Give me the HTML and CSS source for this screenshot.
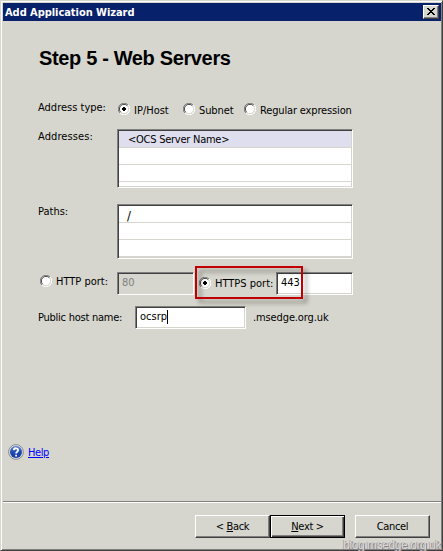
FILE: index.html
```html
<!DOCTYPE html>
<html lang="en">
<head>
<meta charset="utf-8">
<title>Add Application Wizard</title>
<link rel="stylesheet" href="styles.css">
</head>
<body>
<main class="dialog">
  <header class="titlebar">
    <span class="caption">Add Application Wizard</span>
    <button class="close" aria-label="Close"><svg width="8" height="7" viewBox="0 0 8 7" shape-rendering="crispEdges"><path d="M0 0h2v1h1v1h2v-1h1v-1h2v1h-1v1h-1v1h-1v1h1v1h1v1h1v1h-2v-1h-1v-1h-2v1h-1v1h-2v-1h1v-1h1v-1h1v-1h-1v-1h-1v-1h-1z"/></svg></button>
  </header>
  <h1>Step 5 - Web Servers</h1>
  <section class="form">
    <div class="row types">
      <span class="label t-type">Address type:</span>
      <svg class="radio"><use href="#radio-on"/></svg><span class="opt t-ip">IP/Host</span>
      <svg class="radio"><use href="#radio"/></svg><span class="opt t-subnet">Subnet</span>
      <svg class="radio"><use href="#radio"/></svg><span class="opt t-regex">Regular expression</span>
    </div>
    <div class="row addresses">
      <span class="label t-addresses">Addresses:</span>
      <div class="list sunken"><div class="item selected"><span class="t-server">&lt;OCS Server Name&gt;</span></div><div class="item"></div><div class="item"></div><div class="rest"></div></div>
    </div>
    <div class="row paths">
      <span class="label t-paths">Paths:</span>
      <div class="list sunken"><div class="item slash">/</div><div class="item"></div><div class="item"></div></div>
    </div>
    <div class="row ports">
      <svg class="radio"><use href="#radio"/></svg><span class="t-http">HTTP port:</span>
      <div class="field sunken disabled">80</div>
      <div class="https"><svg class="radio"><use href="#radio-on"/></svg><span class="t-https">HTTPS port:</span><i class="highlight"></i></div>
      <div class="field sunken port">443</div>
    </div>
    <div class="row host">
      <span class="t-host">Public host name:</span>
      <div class="field sunken name"><span class="t-name">ocsrp</span><i class="caret"></i></div>
      <span class="t-domain">.msedge.org.uk</span>
    </div>
  </section>
  <div class="help">
    <svg width="16" height="16" viewBox="0 0 16 16"><defs><linearGradient id="blue" x2="0" y2="1"><stop stop-color="#5d83cf"/><stop offset=".5" stop-color="#1d4bb0"/><stop offset="1" stop-color="#153a9b"/></linearGradient></defs><circle cx="8" cy="8" r="7.4" fill="#d8dade" stroke="#8a8d94"/><circle cx="8" cy="8" r="6" fill="url(#blue)"/><path d="M5.8 6.1C5.9 3.6 10.3 3.7 10.1 6.2C10 7.7 8.1 7.8 8.1 9.5M8.1 10.8v1.6" fill="none" stroke="#fff" stroke-width="1.8"/></svg>
    <a class="t-help" href="#">Help</a>
  </div>
  <footer class="footer">
    <button class="btn back"><span class="t-back">&lt; <u>B</u>ack</span></button>
    <button class="btn next"><span class="t-next"><u>N</u>ext &gt;</span></button>
    <button class="btn cancel"><span class="t-cancel">Cancel</span></button>
  </footer>
</main>
<div class="watermark">blog.msedge.org.uk</div>
<svg class="defs">
  <defs>
    <symbol id="radio" viewBox="0 0 12 12"><circle cx="6" cy="6" r="5" fill="#fff"/><path d="M1.9 10.1A5.5 5.5 0 0 1 10.1 1.9" fill="none" stroke="#808080"/><path d="M2.7 9.3A4.6 4.6 0 0 1 9.3 2.7" fill="none" stroke="#404040"/><path d="M10.1 1.9A5.5 5.5 0 0 1 1.9 10.1" fill="none" stroke="#fff"/><path d="M9.3 2.7A4.6 4.6 0 0 1 2.7 9.3" fill="none" stroke="#d6d5cd"/></symbol>
    <symbol id="radio-on" viewBox="0 0 12 12"><use href="#radio" width="12" height="12"/><path d="M5 4h2v1h1v2h-1v1h-2v-1h-1v-2h1z" shape-rendering="crispEdges"/></symbol>
  </defs>
</svg>
</body>
</html>
```
FILE: styles.css
```css
* { box-sizing: border-box; }
body {
  margin: 0;
  width: 443px;
  height: 551px;
  overflow: hidden;
  background: #d6d6ce;
  color: #000;
  font: 11px/14px "DejaVu Sans Condensed", "DejaVu Sans", sans-serif;
  font-stretch: condensed;
}
span, a { white-space: nowrap; }
.dialog {
  height: 551px;
  display: flex;
  flex-direction: column;
  border: 1px solid;
  border-color: #d6d6ce #404040 #404040 #d6d6ce;
  box-shadow: inset 1px 1px #fff, inset -1px -1px #808080;
  padding: 2px;
}
.titlebar {
  flex: none;
  height: 18px;
  margin-right: -1px;
  padding: 0 2px;
  display: flex;
  align-items: center;
  justify-content: space-between;
  background: #08216b;
  color: #fff;
  font-weight: bold;
}
.caption { letter-spacing: -.05px; padding-top: 1px; }
.close {
  width: 16px;
  height: 14px;
  padding: 2px 3px;
  display: flex;
  background: #d6d6ce;
  border: 1px solid;
  border-color: #fff #404040 #404040 #fff;
  box-shadow: inset -1px -1px #808080;
}
h1 {
  margin: 25px 0 0 36px;
  height: 24px;
  font: bold 20px/24px "Liberation Sans", Arial, sans-serif;
  letter-spacing: -.35px;
  white-space: nowrap;
}
.form { display: flex; flex-direction: column; margin-left: 35px; }
.row { display: flex; align-items: flex-start; }
.radio { flex: none; width: 12px; height: 12px; }
.label { width: 79px; }
.types { margin-top: 30px; height: 29px; }
.types .radio { margin-top: 3px; }
.types .label { width: 80px; padding-top: 1px; }
.opt { margin: 4px 0 0 4px; }
.t-ip { width: 49px; }
.t-subnet { width: 45px; letter-spacing: -.1px; }
.t-regex { letter-spacing: -.15px; }
.t-server { letter-spacing: -.25px; }
.addresses { height: 75px; }
.paths { height: 68px; }
.ports { height: 34px; padding-left: 2px; }
.host { height: 23px; }
.sunken {
  background: #fff;
  border: 1px solid;
  border-color: #808080 #fff #fff #808080;
  box-shadow: inset 1px 1px #404040, inset -1px -1px #d6d5cd;
}
.list { width: 236px; padding: 1px; }
.addresses .list { height: 59px; }
.paths .list { height: 55px; }
.item { height: 17px; padding: 2px 0 0 9px; border-bottom: 1px solid #d6d6ce; }
.selected { background: #dfdeee; }
.slash { padding: 3px 0 0 8px; font-size: 13px; }
.addresses .label, .paths .label { padding-top: 1px; }
.t-addresses { letter-spacing: .1px; }
.field { height: 23px; padding: 3px 4px; width: 77px; }
.ports > .radio { margin-top: 3px; }
.t-http { margin: 3px 0 0 4px; width: 61px; }
.disabled { background: #d6d6ce; color: #808080; box-shadow: inset 1px 1px #404040; }
.https { position: relative; display: flex; width: 82px; padding-left: 5px; }
.https .radio { margin-top: 5px; }
.t-https { margin: 5px 0 0 4px; }
.highlight {
  position: absolute;
  z-index: 2;
  left: 1px;
  top: -6px;
  width: 108px;
  height: 33px;
  border: 2px solid #c00000;
  filter: drop-shadow(4px 4px 2px rgb(0 0 0 / .4));
}
.t-host { width: 97px; padding-top: 5px; letter-spacing: -.25px; }
.name { width: 111px; display: flex; }
.caret { width: 1px; height: 14px; background: #000; }
.t-domain { margin: 5px 0 0 7px; letter-spacing: -.12px; }
.help { margin: 115px 0 0 5px; display: flex; gap: 4px; height: 16px; }
.help a { color: #00f; margin-top: 2px; letter-spacing: -.4px; }
.footer {
  margin: 41px -1px 0 0;
  padding: 12px 0 0 192px;
  border-top: 1px solid #808080;
  box-shadow: inset 0 1px #fff;
  display: flex;
}
.btn {
  width: 75px;
  height: 23px;
  padding: 0;
  background: #d6d6ce;
  color: #000;
  font: inherit;
  letter-spacing: -.35px;
  border: 1px solid;
  border-color: #fff #404040 #404040 #fff;
  box-shadow: inset -1px -1px #808080;
}
.footer .btn { margin-top: 1px; }
.next { border-color: #000; box-shadow: inset 1px 1px #fff, inset -1px -1px #404040, inset -2px -2px #808080; }
.cancel { margin-left: 10px; }
.watermark {
  position: absolute;
  right: 2px;
  bottom: -1px;
  color: #d9d7d4;
  text-shadow: 1px 1px #858088, -1px 0 #aaa6a6;
  font: 12px/13px "Liberation Sans", Arial, sans-serif;
  letter-spacing: -.42px;
}
.defs { position: absolute; width: 0; height: 0; }
```
